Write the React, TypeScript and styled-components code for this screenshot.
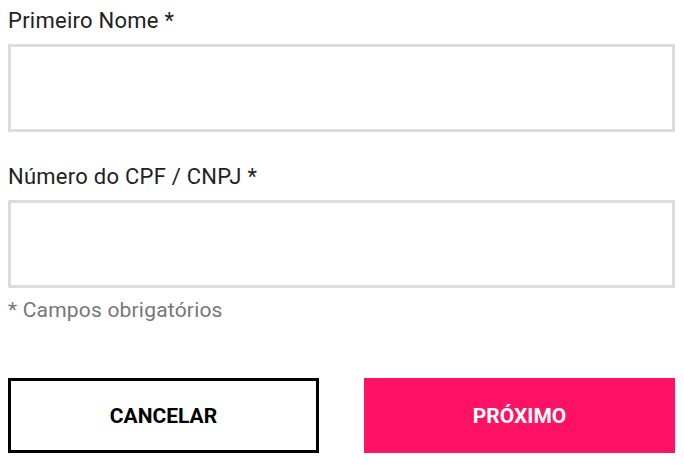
import * as React from 'react';
import styled, { createGlobalStyle } from 'styled-components';

const GlobalStyle = createGlobalStyle`
    body {
        margin: 0;
        background: #fff;
        font-family: Roboto, "Liberation Sans", Arial, sans-serif;
        color: #222;
    }`;

const Form = styled.form`
    width: 667px;
    padding: 9px 8px 0 8px;
    display: flex;
    flex-direction: column;`;

const Field = styled.div`
    display: flex;
    flex-direction: column;
    margin-bottom: ${(p: { gap?: number }) => p.gap ?? 0}px;`;

const Label = styled.label`
    font-size: 22px;
    line-height: 24px;
    letter-spacing: 0.25px;
    margin-bottom: 11px;
    color: #222;`;

const Input = styled.input`
    box-sizing: border-box;
    width: 100%;
    height: 88px;
    border: 3px solid #dcdcdc;
    border-radius: 0;
    padding: 0 16px;
    font-size: 20px;
    font-family: inherit;
    outline: none;`;

const Hint = styled.p`
    margin: 10px 0 0 0;
    font-size: 21px;
    line-height: 24px;
    letter-spacing: 0.2px;
    color: #777;`;

const Actions = styled.div`
    display: grid;
    grid-template-columns: 311px 311px;
    column-gap: 45px;
    margin-top: 56px;`;

const Button = styled.button<{ primary?: boolean }>`
    box-sizing: border-box;
    height: 75px;
    border: ${(p) => (p.primary ? 'none' : '3px solid #000')};
    background: ${(p) => (p.primary ? '#ff1163' : '#fff')};
    color: ${(p) => (p.primary ? '#fff' : '#000')};
    font-family: inherit;
    font-size: 21px;
    font-weight: 700;
    text-transform: uppercase;
    cursor: pointer;`;

class App extends React.Component {
    render() {
        return (
            <>
                <GlobalStyle />
                <Form onSubmit={(e) => e.preventDefault()}>
                    <Field gap={33}>
                        <Label htmlFor="nome">Primeiro Nome *</Label>
                        <Input id="nome" type="text" />
                    </Field>
                    <Field>
                        <Label htmlFor="cpf">Número do CPF / CNPJ *</Label>
                        <Input id="cpf" type="text" />
                    </Field>
                    <Hint>* Campos obrigatórios</Hint>
                    <Actions>
                        <Button type="button">Cancelar</Button>
                        <Button type="submit" primary>Próximo</Button>
                    </Actions>
                </Form>
            </>
        );
    }
}

export default App;
